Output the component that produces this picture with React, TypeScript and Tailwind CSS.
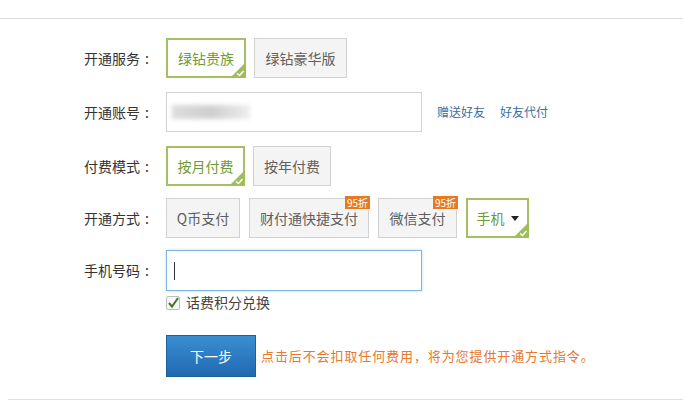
import React from 'react'

const font = "font-['Microsoft_YaHei','Noto_Sans_CJK_SC',sans-serif]"

function CornerCheck() {
  return (
    <svg className="absolute -bottom-[2px] -right-[2px]" width="16" height="16" viewBox="0 0 16 16">
      <path d="M16 0 L16 16 L0 16 Z" fill="#9fbd5b" />
      <path d="M7 11.5 L9.5 13.5 L13.5 9" fill="none" stroke="#fff" strokeWidth="1.4" />
    </svg>
  )
}

function Option({ label, active, width, badge, arrow }: { label: string; active?: boolean; width: string; badge?: boolean; arrow?: boolean }) {
  return (
    <div
      className={`relative flex h-10 items-center justify-center text-[14px] ${width} ${
        active ? 'border-2 border-[#a3c063] bg-white text-[#6e9a34]' : 'border border-[#d2d2d2] bg-[#f4f4f4] text-[#5f5f5f]'
      }`}
    >
      <span>{label}</span>
      {arrow && (
        <svg className="ml-1.5" width="8" height="5" viewBox="0 0 8 5">
          <path d="M0 0 L8 0 L4 5 Z" fill="#222" />
        </svg>
      )}
      {active && <CornerCheck />}
      {badge && (
        <span className="absolute -top-[3px] -right-[2px] bg-[#e67a22] px-[2px] text-[10px] leading-[13px] text-white">95折</span>
      )}
    </div>
  )
}

function Row({ label, children, className }: { label: string; children: React.ReactNode; className?: string }) {
  return (
    <div className={`flex items-center ${className ?? ''}`}>
      <div className="flex w-[82px] shrink-0 text-[14px] text-[#333]">
        <span>{label}</span>
        <span className="ml-[5px]">:</span>
      </div>
      {children}
    </div>
  )
}

export default function App() {
  return (
    <div className={`h-[404px] w-[683px] overflow-hidden bg-white ${font}`}>
      <div className="h-[19px] border-b border-[#dcdcdc]" />
      <div className="pl-[84px] pt-[19px]">
        <Row label="开通服务">
          <div className="flex gap-[8px]">
            <Option label="绿钻贵族" active width="w-[80px]" />
            <Option label="绿钻豪华版" width="w-[93px]" />
          </div>
        </Row>

        <Row label="开通账号" className="mt-[14px]">
          <div className="flex h-10 w-[256px] items-center border border-[#d2d2d2] bg-white px-[5px]">
            <div className="h-[14px] w-[78px] bg-gradient-to-r from-[#ddd] via-[#cfcfcf] to-[#eee] blur-[2px]" />
          </div>
          <a className="ml-[15px] text-[12px] text-[#3a6ea5]">赠送好友</a>
          <a className="ml-[15px] text-[12px] text-[#3a6ea5]">好友代付</a>
        </Row>

        <Row label="付费模式" className="mt-[14px]">
          <div className="flex gap-[8px]">
            <Option label="按月付费" active width="w-[79px]" />
            <Option label="按年付费" width="w-[78px]" />
          </div>
        </Row>

        <Row label="开通方式" className="mt-[12px]">
          <div className="flex gap-[9px]">
            <Option label="Q币支付" width="w-[74px]" />
            <Option label="财付通快捷支付" badge width="w-[120px]" />
            <Option label="微信支付" badge width="w-[79px]" />
            <Option label="手机" active arrow width="w-[63px]" />
          </div>
        </Row>

        <Row label="手机号码" className="mt-[12px]">
          <div className="flex h-[41px] w-[256px] items-center border border-[#7db4e0] bg-white px-[7px] shadow-[0_0_3px_rgba(91,157,214,0.35)]">
            <div className="h-[18px] w-px bg-[#333]" />
          </div>
        </Row>

        <div className="ml-[82px] mt-[2px] flex h-[19px] items-center">
          <svg width="14" height="14" viewBox="0 0 14 14">
            <rect x="0.5" y="0.5" width="13" height="13" rx="1.5" fill="#f7f7f7" stroke="#bdbdbd" />
            <path d="M3 7 L6 10.5 L12 2" fill="none" stroke="#3c7a21" strokeWidth="2" />
          </svg>
          <span className="ml-[6px] text-[14px] text-[#444]">话费积分兑换</span>
        </div>

        <div className="ml-[82px] mt-[23px] flex items-center">
          <button className="h-[42px] w-[90px] border border-[#1e5f9e] bg-gradient-to-b from-[#3b8ed3] to-[#2169b1] text-[14px] text-white">
            下一步
          </button>
          <span className="ml-[5px] text-[13px] tracking-[0.9px] text-[#e8782e]">点击后不会扣取任何费用，将为您提供开通方式指令。</span>
        </div>
      </div>
      <div className="ml-[8px] mt-[22px] border-t border-[#e0e0e0]" />
    </div>
  )
}
